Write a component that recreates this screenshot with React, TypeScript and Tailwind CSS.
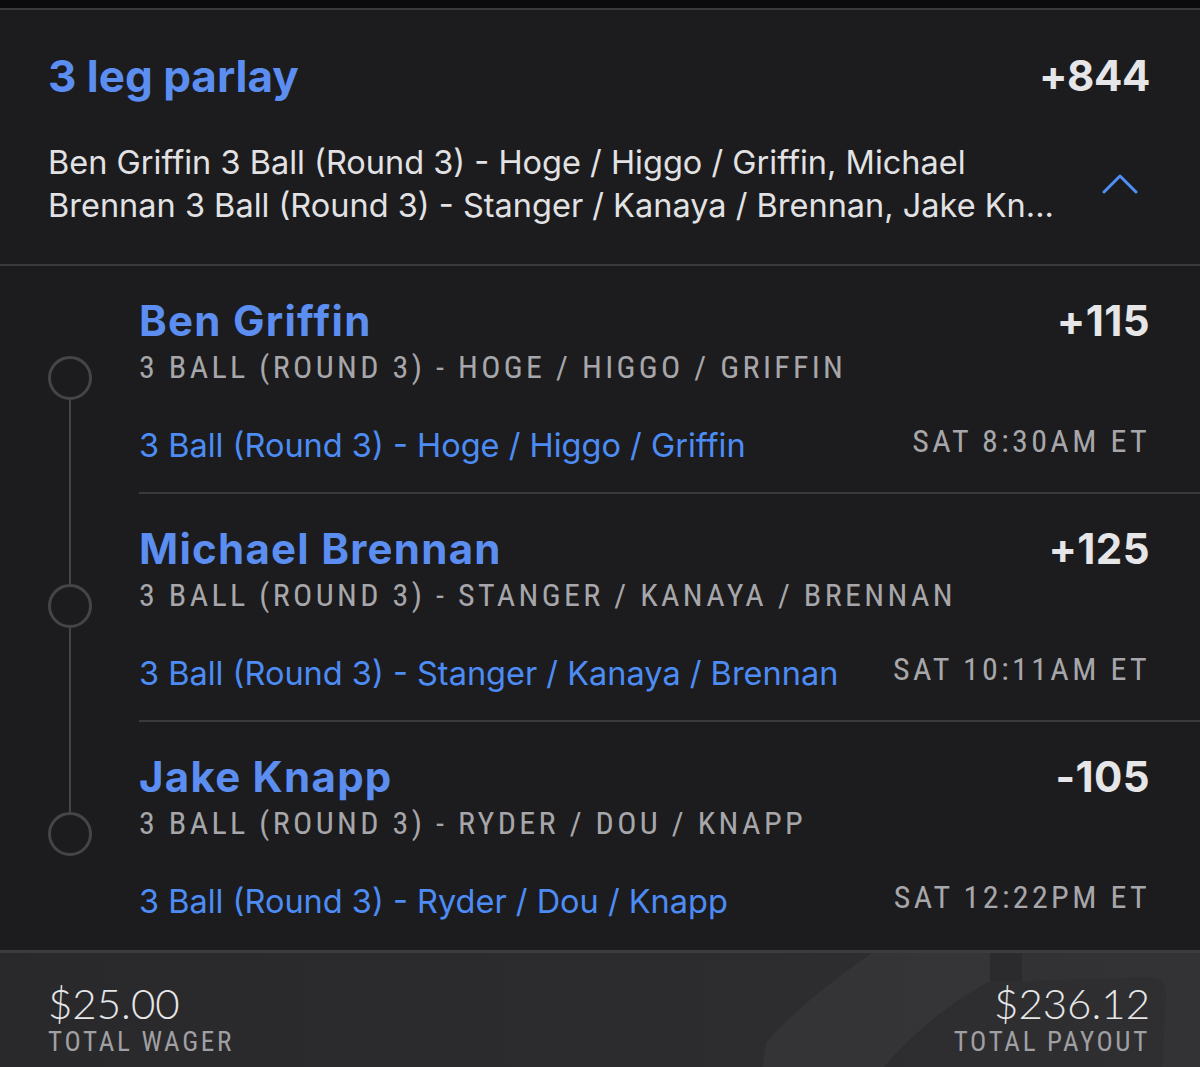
import React from "react";

const legs = [
  {
    name: "Ben Griffin",
    odds: "+115",
    sub: "3 BALL (ROUND 3) - HOGE / HIGGO / GRIFFIN",
    link: "3 Ball (Round 3) - Hoge / Higgo / Griffin",
    time: "SAT 8:30AM ET",
  },
  {
    name: "Michael Brennan",
    odds: "+125",
    sub: "3 BALL (ROUND 3) - STANGER / KANAYA / BRENNAN",
    link: "3 Ball (Round 3) - Stanger / Kanaya / Brennan",
    time: "SAT 10:11AM ET",
  },
  {
    name: "Jake Knapp",
    odds: "-105",
    sub: "3 BALL (ROUND 3) - RYDER / DOU / KNAPP",
    link: "3 Ball (Round 3) - Ryder / Dou / Knapp",
    time: "SAT 12:22PM ET",
  },
];

const sans = "font-['Inter','Lato',sans-serif]";
const lato = "font-['Lato','Liberation_Sans',sans-serif]";
const cond = "font-['Liberation_Sans_Narrow','Roboto_Condensed','Roboto',sans-serif]";

export default function App() {
  return (
    <div className="w-full min-h-[1067px] bg-[#0b0b0d] pt-[8px]">
      <div className="bg-[#1c1c1e] border-t-2 border-[#3a3a3c]">
        {/* Header */}
        <div className="pt-[40px] pb-[37px] pl-[48px] pr-[50px] border-b-2 border-[#3a3a3c]">
          <div className={`flex justify-between items-center ${sans}`}>
            <div className="text-[44px] leading-[52px] font-bold text-[#5b8ef0]">3 leg parlay</div>
            <div className="text-[42px] leading-[52px] font-bold tracking-[-0.01em] text-[#e6e6e8]">+844</div>
          </div>
          <div className="mt-[39px] flex items-center justify-between">
            <div className={`${sans} text-[32.5px] leading-[43px] text-[#e2e2e4]`}>
              <div className="whitespace-nowrap">Ben Griffin 3 Ball (Round 3) - Hoge / Higgo / Griffin, Michael</div>
              <div className="whitespace-nowrap">Brennan 3 Ball (Round 3) - Stanger / Kanaya / Brennan, Jake Kn...</div>
            </div>
            <svg width="36" height="22" viewBox="0 0 36 22" className="mr-[12px]" fill="none">
              <polyline points="2,19 18,3 34,19" stroke="#4f8ff7" strokeWidth="3" strokeLinecap="round" strokeLinejoin="round" />
            </svg>
          </div>
        </div>

        {/* Legs */}
        {legs.map((leg, i) => (
          <div key={leg.name} className="flex">
            <div className="w-[139px] flex flex-col items-center">
              <div className={`h-[90px] w-[2px] ${i === 0 ? "bg-transparent" : "bg-[#454547]"}`} />
              <div className="w-[44px] h-[44px] rounded-full border-[3px] border-[#454547] shrink-0" />
              <div className={`flex-1 w-[2px] ${i === legs.length - 1 ? "bg-transparent" : "bg-[#454547]"}`} />
            </div>
            <div
              className={`flex-1 pr-[50px] pt-[30px] pb-[24px] ${
                i === legs.length - 1 ? "border-b-2 border-transparent" : "border-b-2 border-[#3a3a3c]"
              }`}
            >
              <div className={`flex justify-between items-center ${sans}`}>
                <div className="text-[42px] leading-[50px] font-bold tracking-[0.03em] text-[#5b8ef0]">{leg.name}</div>
                <div className="text-[42px] leading-[50px] font-bold tracking-[0.01em] text-[#e6e6e8]">{leg.odds}</div>
              </div>
              <div className={`${cond} text-[32px] leading-[42px] tracking-[0.105em] text-[#a7a7ab] whitespace-nowrap`}>
                {leg.sub}
              </div>
              <div className="mt-[36px] flex justify-between items-center h-[44px]">
                <div className={`${sans} text-[32.5px] leading-[44px] text-[#4d8cf5] whitespace-nowrap`}>{leg.link}</div>
                <div className={`${cond} text-[32px] leading-[34px] tracking-[0.105em] text-[#a7a7ab] mb-[10px] whitespace-nowrap`}>
                  {leg.time}
                </div>
              </div>
            </div>
          </div>
        ))}
      </div>

      {/* Footer */}
      <div className="relative overflow-hidden border-t-[3px] border-[#3c3c3e] bg-gradient-to-r from-[#29292b] to-[#2f2f31] h-[118px]">
        <svg className="absolute left-0 top-0" width="1200" height="118" viewBox="0 950 1200 118">
          <path d="M762,1068 L766,1040 Q800,1000 872,950 L990,950 L990,978 Q930,1010 880,1068 Z" fill="#ffffff" fillOpacity="0.035" />
          <rect x="990" y="950" width="32" height="28" fill="#000000" fillOpacity="0.06" />
          <path d="M1022,950 L1200,950 L1200,1068 L1162,1068 L1166,992 Q1166,974 1148,974 L1022,978 Z" fill="#ffffff" fillOpacity="0.025" />
        </svg>
        <div className="relative flex justify-between pl-[48px] pr-[50px] pt-[28px]">
          <div>
            <div className={`${lato} font-light text-[42px] leading-[44px] text-[#e6e6e8]`}>$25.00</div>
            <div className={`${cond} mt-[2px] text-[27px] leading-[30px] tracking-[0.1em] text-[#a0a0a4]`}>TOTAL WAGER</div>
          </div>
          <div className="text-right">
            <div className={`${lato} font-light text-[42px] leading-[44px] text-[#e6e6e8]`}>$236.12</div>
            <div className={`${cond} mt-[2px] text-[27px] leading-[30px] tracking-[0.1em] text-[#a0a0a4]`}>TOTAL PAYOUT</div>
          </div>
        </div>
      </div>
    </div>
  );
}
